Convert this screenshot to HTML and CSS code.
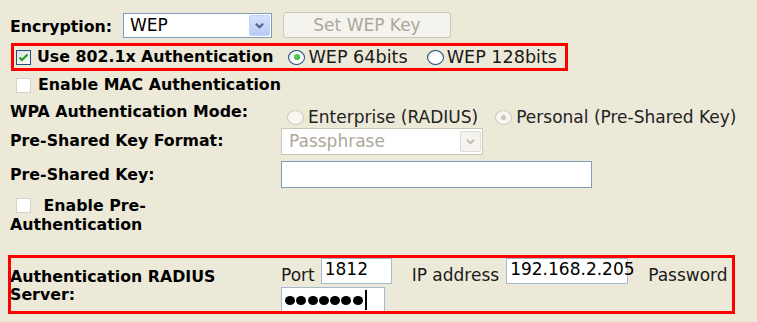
FILE: index.html
```html
<!DOCTYPE html>
<html>
<head>
<meta charset="utf-8">
<link rel="stylesheet" href="styles.css">
</head>
<body>
<div class="page">
  <div class="row row-enc">
    <span class="lbl enc-lbl">Encryption:</span>
    <div class="select sel-enc">
      <span class="sel-text">WEP</span>
      <span class="sel-btn"><svg width="21" height="21" viewBox="0 0 21 21"><polyline points="6.5,8.5 10.5,12.5 14.5,8.5" fill="none" stroke="#4D6185" stroke-width="2.2"/></svg></span>
    </div>
    <div class="btn">Set WEP Key</div>
  </div>

  <div class="box1">
    <span class="chk chk-on"><svg width="13" height="13" viewBox="0 0 13 13"><polyline points="2.5,6.5 5,9 10.5,3.5" fill="none" stroke="#21A121" stroke-width="2.2"/></svg></span>
    <span class="lbl lbl-8021x">Use 802.1x Authentication</span>
    <span class="radio radio-on r1"></span><span class="txt rt">WEP 64bits</span>
    <span class="radio r2"></span><span class="txt rt">WEP 128bits</span>
  </div>

  <div class="row row-mac">
    <span class="chk chk-light"></span>
    <span class="lbl lbl-mac">Enable MAC Authentication</span>
  </div>

  <div class="row row-wpa">
    <span class="lbl cell-l">WPA Authentication Mode:</span>
    <div class="cell-r wpa-radios">
      <span class="radio radio-dis r1"></span><span class="txt rt-dis">Enterprise (RADIUS)</span>
      <span class="radio radio-dis radio-dis-on r3"></span><span class="txt rt-dis">Personal (Pre-Shared Key)</span>
    </div>
  </div>

  <div class="row row-fmt">
    <span class="lbl cell-l">Pre-Shared Key Format:</span>
    <div class="select sel-fmt">
      <span class="sel-text sel-text-dis">Passphrase</span>
      <span class="sel-btn sel-btn-dis"><svg width="21" height="21" viewBox="0 0 21 21"><polyline points="6.5,8.5 10.5,12.5 14.5,8.5" fill="none" stroke="#B9B7AC" stroke-width="2"/></svg></span>
    </div>
  </div>

  <div class="row row-psk">
    <span class="lbl cell-l">Pre-Shared Key:</span>
    <div class="input in-psk"></div>
  </div>

  <div class="row-pre">
    <span class="lbl pre-lbl"><span class="chk chk-light chk-inline"></span> Enable Pre-Authentication</span>
  </div>

  <div class="box2">
    <div class="radius-l"><span class="lbl radius-lbl">Authentication RADIUS Server:</span></div>
    <div class="radius-r">
      <div class="line1">
        <span class="txt ftxt">Port</span>
        <div class="input in-port"><span class="val">1812</span></div>
        <span class="txt ftxt ip-lbl">IP address</span>
        <div class="input in-ip"><span class="val">192.168.2.205</span></div>
        <span class="txt ftxt pw-lbl">Password</span>
      </div>
      <div class="line2">
        <div class="input in-pw">
          <span class="dot"></span><span class="dot"></span><span class="dot"></span><span class="dot"></span><span class="dot"></span><span class="dot"></span><span class="dot"></span><span class="caret"></span>
        </div>
      </div>
    </div>
  </div>
</div>
</body>
</html>
```
FILE: styles.css
```css
* { box-sizing: border-box; }
html, body { margin: 0; padding: 0; }
body {
  background: #ECE9D8;
  font-family: "DejaVu Sans", Verdana, sans-serif;
  color: #111;
  width: 757px;
  height: 322px;
  overflow: hidden;
}
.page { padding: 12px 0 0 10px; }

.lbl {
  font-weight: bold;
  font-size: 15.8px;
  line-height: 18px;
  color: #000;
  white-space: nowrap;
}
.txt {
  font-size: 17px;
  line-height: 20px;
  color: #1a1a1a;
  white-space: nowrap;
}

.row { display: flex; align-items: center; }

/* Row 1 */
.row-enc { height: 26px; }
.enc-lbl { width: 113px; padding-top: 4px; }
.select {
  display: flex;
  align-items: center;
  background: #fff;
  border: 1px solid #7F9DB9;
}
.sel-enc { width: 149px; height: 25px; }
.sel-text { flex: 1; font-size: 17px; line-height: 20px; padding-left: 6px; color: #000; }
.sel-btn {
  width: 21px; height: 21px; margin-right: 1px;
  background: linear-gradient(#D3E1FC, #B6CBF6);
  border: 1px solid #C3D3FD;
  border-radius: 2px;
  display: flex; align-items: center; justify-content: center;
}
.sel-btn svg { display: block; }
.btn {
  margin-left: 11px;
  width: 168px; height: 26px;
  border: 1px solid #C9C7BA;
  border-radius: 3px;
  background: #F4F3EE;
  color: #ACA899;
  font-size: 17px; line-height: 24px;
  text-align: center;
}

/* Checkboxes & radios */
.chk {
  display: inline-flex; align-items: center; justify-content: center;
  width: 15px; height: 15px;
  background: #fff;
  flex: none;
}
.chk-on { border: 1px solid #1C5180; background: linear-gradient(135deg, #DCDCD7, #fff); }
.chk-light { border: 1px solid #D6D4CA; }
.chk svg { display: block; }

.radio {
  display: inline-block;
  flex: none;
  width: 17px; height: 15px;
  border-radius: 50%;
  border: 1px solid #1C5180;
  background: radial-gradient(circle at 60% 60%, #fff 40%, #DCDCD7);
  position: relative;
}
.radio-on::after {
  content: "";
  position: absolute;
  left: 4.5px; top: 3.5px;
  width: 6px; height: 6px;
  border-radius: 50%;
  background: radial-gradient(circle at 40% 40%, #5EDB5E, #21A121);
}
.radio-dis { border-color: #CFCDC2; background: #F7F6F1; }
.radio-dis-on::after {
  content: "";
  position: absolute;
  left: 5px; top: 4px;
  width: 5px; height: 5px;
  border-radius: 50%;
  background: #CAC8BB;
}

/* Box 1 */
.box1 {
  margin-top: 5px;
  margin-left: 1px;
  width: 557px; height: 28px;
  border: 3px solid #FF0000;
  display: flex; align-items: center;
  padding-left: 2px;
}
.lbl-8021x { margin-left: 6px; }
.box1 .r1 { margin-left: 15px; }
.box1 .r2 { margin-left: 19px; }
.rt { margin-left: 3px; font-size: 17.6px; }

/* Row 3 */
.row-mac { margin-top: 4px; height: 20px; padding-left: 6px; }
.lbl-mac { margin-left: 7px; }

/* Grid-like rows */
.cell-l { width: 271px; flex: none; }
.row-wpa { margin-top: 7px; height: 20px; }
.wpa-radios { display: flex; align-items: center; margin-top: 10px; }
.wpa-radios .r1 { margin-left: 6px; }
.wpa-radios .r3 { margin-left: 17px; }
.rt-dis { margin-left: 4px; color: #222; }

.row-fmt { margin-top: 6px; height: 26px; }
.sel-fmt { width: 202px; height: 27px; border-color: #C9C7BA; }
.sel-text-dis { color: #ACA899; padding-left: 7px; }
.sel-btn-dis { background: #F4F3EE; border: 1px solid #DEDCD2; }

.row-psk { margin-top: 7px; height: 27px; }
.input { background: #fff; border: 1px solid #7F9DB9; }
.in-psk { width: 311px; height: 27px; }

/* Row 7 */
.row-pre { margin-top: 9px; }
.pre-lbl {
  display: block;
  width: 160px;
  white-space: normal;
  line-height: 18.5px;
}
.chk-inline { vertical-align: -2px; margin: 0 7px 0 6px; }

/* Box 2 */
.box2 {
  margin-top: 21px;
  margin-left: -2px;
  width: 727px; height: 59px;
  position: relative;
  display: flex;
  overflow: hidden;
}
.box2::after {
  content: "";
  position: absolute;
  inset: 0;
  border: 3px solid #FF0000;
  pointer-events: none;
}
.radius-l {
  width: 273px; flex: none;
  padding-left: 2px;
  display: flex; align-items: center;
  padding-top: 3px;
}
.radius-lbl { white-space: normal; width: 240px; }
.radius-r { padding-top: 3px; }
.line1 { display: flex; align-items: flex-start; height: 26px; }
.ftxt { margin-top: 7px; }
.in-port { margin-left: 6px; width: 71px; height: 26px; border-color: #A5B9CF; }
.ip-lbl { margin-left: 20px; }
.in-ip { margin-left: 7px; width: 122px; height: 26px; border-color: #A5B9CF; }
.pw-lbl { margin-left: 20px; }
.val { display: block; font-size: 17px; line-height: 20px; padding-left: 3px; color: #000; }
.line2 { margin-top: 3px; }
.in-pw {
  width: 104px; height: 28px;
  border-color: #A5B9CF;
  display: flex; align-items: center;
  padding-left: 3px;
  padding-bottom: 2px;
}
.dot {
  width: 10px; height: 9px;
  border-radius: 50%;
  background: #000;
  margin-right: 1.3px;
  flex: none;
}
.caret {
  width: 2px; height: 20px;
  background: #000;
  margin-left: 1px;
}
```
